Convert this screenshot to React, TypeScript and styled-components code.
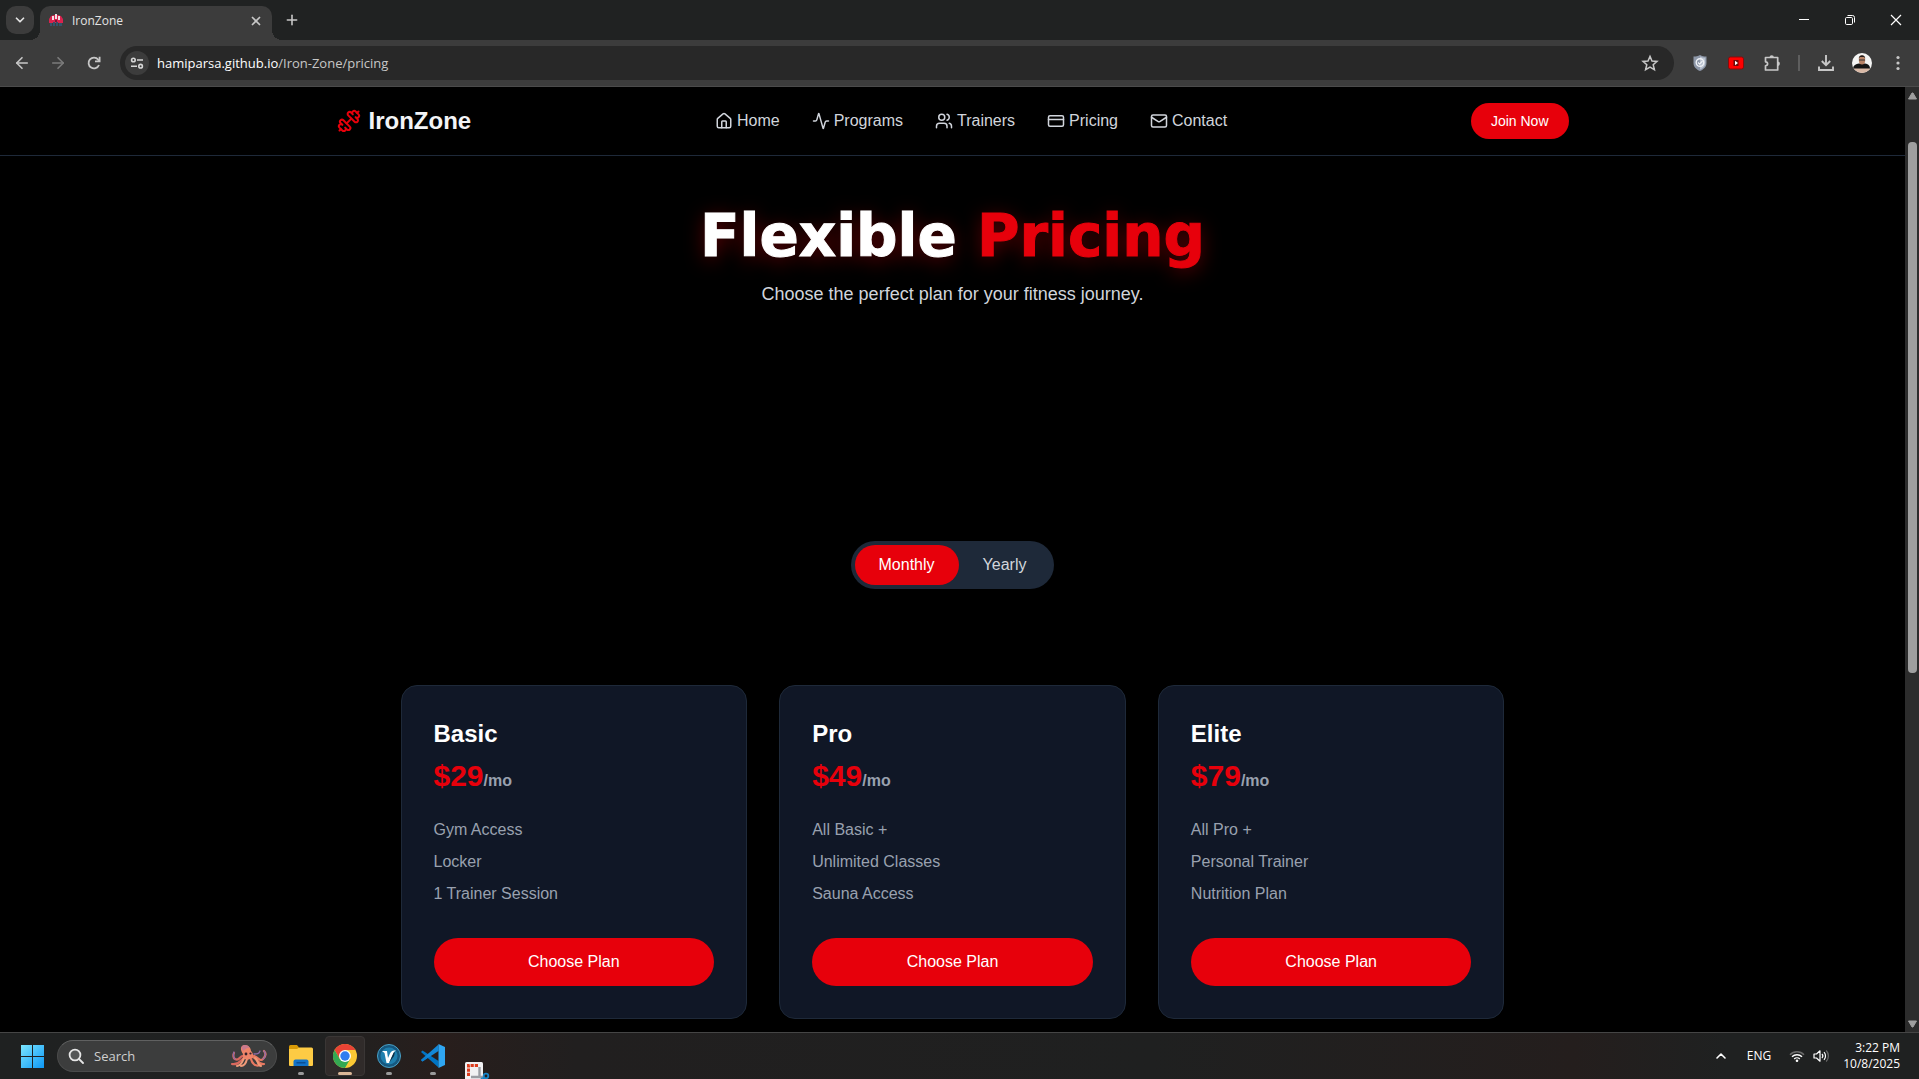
import React, { useState } from "react";
import styled, { createGlobalStyle, css } from "styled-components";
import {
  Activity,
  ArrowLeft,
  ArrowRight,
  ChevronDown,
  ChevronUp,
  CreditCard,
  Dumbbell,
  House,
  Mail,
  Plus,
  Users,
  X,
} from "lucide-react";

const sans = `"Liberation Sans", Arial, sans-serif`;
const ui = `"Open Sans", "Noto Sans", sans-serif`;
const red = "#e7000b";

const GlobalStyle = createGlobalStyle`
  * { box-sizing: border-box; }
  body { margin: 0; background: #000; overflow: hidden; }
  h1, h2, p, ul { margin: 0; padding: 0; }
  button { border: 0; padding: 0; background: none; color: inherit; font: inherit; cursor: pointer; }
  a { color: inherit; text-decoration: none; }
  svg { display: block; flex: none; }
`;

const Screen = styled.div`
  display: flex;
  flex-direction: column;
  height: 100vh;
  overflow: hidden;
`;

/* Browser window */

const TabStrip = styled.header`
  display: flex;
  flex: none;
  height: 40px;
  padding: 6px 0 0 6px;
  background: #202222;
  color: #e3e3e3;
  font: 12px/16px ${ui};
`;

const TabSearch = styled.button`
  display: grid;
  place-items: center;
  width: 28px;
  height: 28px;
  border-radius: 10px;
  background: #3c3c3c;
`;

const Tab = styled.div`
  position: relative;
  display: flex;
  align-items: center;
  gap: 8px;
  width: 232px;
  height: 34px;
  margin-left: 6px;
  padding: 0 8px 4px;
  border-radius: 10px 10px 0 0;
  background: #3c3c3c;

  &::before,
  &::after {
    content: "";
    position: absolute;
    bottom: 0;
    width: 10px;
    height: 10px;
  }
  &::before {
    right: 100%;
    background: radial-gradient(circle at 0 0, transparent 10px, #3c3c3c 10px);
  }
  &::after {
    left: 100%;
    background: radial-gradient(circle at 100% 0, transparent 10px, #3c3c3c 10px);
  }
`;

const TabTitle = styled.span`
  flex: 1;
`;

const PlainButton = styled.button<{ $w: number; $h: number; $dim?: boolean }>`
  display: grid;
  place-items: center;
  flex: none;
  width: ${(p) => p.$w}px;
  height: ${(p) => p.$h}px;
  color: ${(p) => (p.$dim ? "#7b7b7b" : "#c7c7c7")};
`;

const NewTab = styled(PlainButton)`
  margin-left: 6px;
`;

const WindowControls = styled.div`
  display: flex;
  margin-left: auto;
  color: #fff;
`;

const Toolbar = styled.div`
  display: flex;
  align-items: center;
  flex: none;
  height: 47px;
  padding: 0 3px 0 4px;
  border-bottom: 1px solid #4b4b4b;
  background: #3c3c3c;
`;

const AddressBar = styled.form`
  display: flex;
  align-items: center;
  flex: 1;
  height: 34px;
  margin: 0 8px;
  padding: 0 6px 0 5px;
  border-radius: 17px;
  background: #282828;
  font: 13px/20px ${ui};
`;

const SiteInfo = styled.button`
  display: grid;
  place-items: center;
  width: 24px;
  height: 24px;
  border-radius: 12px;
  background: #3c3c3c;
  color: #d6d6d6;
`;

const Address = styled.span`
  flex: 1;
  margin-left: 8px;
  color: #c7c7c7;

  b {
    color: #fff;
    font-weight: 400;
  }
`;

const Divider = styled.span`
  width: 2px;
  height: 16px;
  margin: 0 8px;
  background: #5e5e5e;
`;

/* Site */

const Viewport = styled.div`
  display: flex;
  flex: 1;
  min-height: 0;
`;

const Site = styled.div`
  flex: 1;
  min-width: 0;
  overflow: hidden;
  background: #000;
  color: #fff;
  font: 16px/24px ${sans};
`;

const SiteHeader = styled.header`
  border-bottom: 1px solid #1e2939;
`;

const HeaderInner = styled.div`
  display: flex;
  align-items: center;
  justify-content: space-between;
  max-width: 1280px;
  margin: 0 auto;
  padding: 16px 24px;
`;

const Logo = styled.a`
  display: flex;
  align-items: center;
  gap: 8px;
  color: #f3f4f6;
  font-size: 24px;
  font-weight: 700;
  line-height: 32px;

  svg {
    color: ${red};
  }
`;

const Nav = styled.nav`
  display: flex;
  gap: 32px;
  color: #d1d5dc;
`;

const NavLink = styled.a`
  display: flex;
  align-items: center;
  gap: 4px;
`;

const pill = css`
  border-radius: 24px;
  background: ${red};
  color: #fff;
`;

const JoinButton = styled.button`
  ${pill}
  padding: 8px 20px;
  font-size: 14px;
  line-height: 20px;
`;

const Hero = styled.section`
  padding: 48px 24px 0;
  text-align: center;
`;

const HeroTitle = styled.h1`
  font: 900 58px/64px "DejaVu Sans", ${sans};
  -webkit-text-stroke: 1px currentColor;
  text-shadow: 0 4px 20px rgba(231, 0, 11, 0.4);

  span {
    color: ${red};
  }
`;

const HeroText = styled.p`
  margin-top: 12px;
  color: #d1d5dc;
  font-size: 18px;
  line-height: 28px;
`;

const BillingRow = styled.div`
  display: flex;
  justify-content: center;
  padding: 233px 0 96px;
`;

const Billing = styled.div`
  display: flex;
  padding: 4px;
  border-radius: 24px;
  background: #1e2939;
`;

const BillingOption = styled.button<{ $on: boolean }>`
  padding: 8px 24px;
  border-radius: 20px;
  background: ${(p) => (p.$on ? red : "transparent")};
  color: ${(p) => (p.$on ? "#fff" : "#d1d5dc")};
`;

const Plans = styled.section`
  display: grid;
  grid-template-columns: repeat(3, 1fr);
  gap: 32px;
  max-width: 1152px;
  margin: 0 auto;
  padding: 0 24px 48px;
`;

const PlanCard = styled.article`
  padding: 32px;
  border: 1px solid #1e2939;
  border-radius: 16px;
  background: #101726;
`;

const PlanName = styled.h2`
  font-size: 24px;
  line-height: 32px;
`;

const Price = styled.p`
  margin-top: 8px;
  color: ${red};
  font-size: 30px;
  font-weight: 700;
  line-height: 36px;

  span {
    color: #99a1af;
    font-size: 16px;
    line-height: 24px;
  }
`;

const Features = styled.ul`
  display: grid;
  gap: 8px;
  margin: 24px 0 32px;
  color: #99a1af;
  list-style: none;
`;

const ChooseButton = styled.button`
  ${pill}
  width: 100%;
  padding: 12px;
`;

const ScrollTrack = styled.div`
  display: flex;
  flex-direction: column;
  width: 14px;
  padding: 5px 2px 4px 3px;
  background: #2c2c2c;
`;

const ScrollSpace = styled.div`
  flex: 1;
  display: flex;
  flex-direction: column;
  padding: 42px 0 347px;
`;

const ScrollThumb = styled.div`
  flex: 1;
  border-radius: 4px;
  background: #9f9f9f;
`;

/* Taskbar */

const Taskbar = styled.footer`
  display: flex;
  flex: none;
  height: 47px;
  padding: 0 19px 0 10px;
  border-top: 1px solid #454545;
  background: linear-gradient(90deg, #1f2121 0, #202121 17%, #281e1c 23%, #211f1f 30%, #1f2020 60%, #241e1d 82%, #1f2121 90%);
  color: #fff;
  font: 12px/16px ${ui};
`;

const TaskButton = styled.button<{ $active?: boolean }>`
  position: relative;
  display: grid;
  place-items: center;
  width: 40px;
  height: 40px;
  margin: 3px 2px;
  border: 1px solid ${(p) => (p.$active ? "#3a3635" : "transparent")};
  border-radius: 4px;
  background: ${(p) => (p.$active ? "#302b2a" : "transparent")};
`;

const RunMark = styled.i<{ $active?: boolean }>`
  position: absolute;
  bottom: 0;
  left: 50%;
  width: ${(p) => (p.$active ? 14 : 6)}px;
  height: 3px;
  border-radius: 2px;
  background: ${(p) => (p.$active ? "#dcb898" : "#9a9a9a")};
  transform: translateX(-50%);
`;

const OpeningApp = styled.button`
  align-self: flex-end;
  width: 44px;
  padding-left: 10px;
`;

const SearchBox = styled.label`
  display: flex;
  align-items: center;
  align-self: flex-start;
  gap: 10px;
  width: 220px;
  height: 32px;
  margin: 7px 2px 0 3px;
  padding: 0 8px 0 10px;
  border: 1px solid #4a4b4b;
  border-top-color: #606161;
  border-radius: 16px;
  background: #3c3d3d;
`;

const SearchInput = styled.input`
  flex: 1;
  min-width: 0;
  padding: 0;
  border: 0;
  outline: 0;
  background: none;
  color: #fff;
  font: 13px/20px ${ui};

  &::placeholder {
    color: #cfcfcf;
    opacity: 1;
  }
`;

const Tray = styled.div`
  display: flex;
  align-items: center;
  margin-left: auto;
`;

const Language = styled.span`
  margin: 0 18px;
`;

const TrayStatus = styled.span`
  display: flex;
  gap: 8px;
  margin-right: 13px;
`;

const Clock = styled.time`
  text-align: right;
`;

/* Drawings */

const Favicon = () => (
  <svg width="16" height="16" viewBox="0 0 16 16">
    <path d="M1 10V6l2-3 3-1h4l3 1 2 3v4z" fill="#d9234e" />
    <path d="M4 3h2v4H4zM7 1h2v5H7zM10 3h2v4h-2z" fill="#f3dfe5" />
    <path d="M2 10h2v3H2zM5 9h2v4H5zM8 9h2v4H8zM11 10h3v3h-3z" fill="#31536b" />
    <path d="M7 7h2v2H7z" fill="#7c1233" />
  </svg>
);

const RestoreIcon = () => (
  <svg width="12" height="12" viewBox="0 0 12 12" fill="none" stroke="#fff">
    <rect x="1.5" y="3.5" width="7" height="7" rx="1.2" />
    <path d="M3.5 1.5h5a2 2 0 0 1 2 2v5" />
  </svg>
);

const ReloadIcon = () => (
  <svg width="16" height="16" viewBox="0 0 16 16" fill="none" stroke="currentColor" strokeWidth="1.8">
    <path d="M13 10a5.4 5.4 0 1 1-.8-5.4L13.4 6" />
    <path d="M13.6 1.8v4.6H9" />
  </svg>
);

const TuneIcon = () => (
  <svg width="14" height="14" viewBox="0 0 14 14" fill="none" stroke="currentColor" strokeWidth="1.6">
    <circle cx="3.4" cy="4" r="1.8" />
    <path d="M7 4h6M1 10.200h6" />
    <circle cx="10.600" cy="10.200" r="1.800" />
  </svg>
);

const StarIcon = () => (
  <svg width="18" height="18" viewBox="0 0 18 18" fill="none" stroke="currentColor" strokeWidth="1.5">
    <path d="M9 2.400l2 4.600 5 .4-3.800 3.300 1.200 4.900L9 13l-4.400 2.600 1.200-4.900L2 7.400 7 7z" />
  </svg>
);

const ShieldIcon = () => (
  <svg width="16" height="18" viewBox="0 0 16 18">
    <path d="M8 1c2 1 4 1.500 6.500 1.500V9c0 4-3 6.500-6.500 8-3.500-1.500-6.500-4-6.500-8V2.500C4 2.500 6 2 8 1z" fill="#8d97a8" />
    <path d="M8 2.500c1.800.8 3.500 1.200 5.300 1.200V9c0 3.200-2.300 5.300-5.300 6.600z" fill="#b9c1cf" />
    <circle cx="8" cy="8.500" r="3.800" fill="none" stroke="#eef1f6" strokeWidth="1.400" />
    <path d="M6 8.500l1.600 1.600L10.500 7" fill="none" stroke="#eef1f6" strokeWidth="1.200" />
  </svg>
);

const VideoIcon = () => (
  <svg width="16" height="14" viewBox="0 0 16 14">
    <rect x=".5" y="1" width="15" height="12" rx="2" fill="#f00" stroke="#8b0a0a" />
    <rect x="5.500" y="4" width="5" height="6" fill="#6e0808" />
    <path d="M7 4.800L10 7 7 9.200z" fill="#fff" />
  </svg>
);

const PuzzleIcon = () => (
  <svg width="18" height="18" viewBox="0 0 18 18" fill="none" stroke="currentColor" strokeWidth="1.7" strokeLinejoin="round">
    <path d="M2.500 3.500h12.200V16H2.500v-4.200c2.800-.2 2.800-3.800 0-4z" />
    <path d="M6.500 3.500a2.200 2.200 0 0 1 4.400 0zM14.700 7.600a2.200 2.200 0 0 1 0 4.400z" fill="currentColor" stroke="none" />
  </svg>
);

const DownloadIcon = () => (
  <svg width="18" height="18" viewBox="0 0 18 18" fill="none" stroke="currentColor" strokeWidth="1.9">
    <path d="M9 1v10M4.800 7L9 11.200 13.200 7M2 12.500V16h14v-3.500" />
  </svg>
);

const Avatar = () => (
  <svg width="20" height="20" viewBox="0 0 20 20">
    <clipPath id="avatar-clip">
      <circle cx="10" cy="10" r="10" />
    </clipPath>
    <g clipPath="url(#avatar-clip)">
      <path d="M0 0h20v20H0z" fill="#f5f5f4" />
      <path d="M1 16c0-4 3-5 6-5.500h6c3 .5 5 1.500 5 5.500z" fill="#151515" />
      <ellipse cx="10" cy="7" rx="3.200" ry="4.500" fill="#b88366" />
      <path d="M6.700 5.500C6.700 1 13.300 1 13.300 5.500L12 4H8z" fill="#241c19" />
      <path d="M7 6.500h6v1H7z" fill="#333" />
      <path d="M0 15.500h20V20H0z" fill="#d9b9a6" />
    </g>
  </svg>
);

const DotsIcon = () => (
  <svg width="4" height="16" viewBox="0 0 4 16" fill="currentColor">
    <circle cx="2" cy="2.500" r="1.600" />
    <circle cx="2" cy="8" r="1.600" />
    <circle cx="2" cy="13.500" r="1.600" />
  </svg>
);

const ScrollArrow = ({ down }: { down?: boolean }) => (
  <svg width="9" height="8" viewBox="0 0 9 8" fill="#9f9f9f">
    <path d={down ? "M.5 1h8L5 7H4z" : "M.5 7h8L5 1H4z"} stroke="#9f9f9f" strokeLinejoin="round" />
  </svg>
);

const WindowsIcon = () => (
  <svg width="23" height="23" viewBox="0 0 23 23">
    <linearGradient id="win" x1="0" y1="0" x2="1" y2="1" gradientUnits="objectBoundingBox">
      <stop offset="0" stopColor="#7be6ff" />
      <stop offset="1" stopColor="#0d97f5" />
    </linearGradient>
    <path d="M0 0h11v11H0zM12 0h11v11H12zM0 12h11v11H0zM12 12h11v11H12z" fill="url(#win)" />
  </svg>
);

const SearchIcon = () => (
  <svg width="16" height="16" viewBox="0 0 16 16" fill="none" stroke="#e6e6e6" strokeWidth="1.800">
    <circle cx="7" cy="7" r="5.400" fill="#555757" />
    <path d="M11 11l4 4" strokeLinecap="round" />
  </svg>
);

const OctopusIcon = () => (
  <svg width="38" height="24" viewBox="0 0 38 24" fill="none" strokeLinecap="round">
    <path d="M16 14C11 13 10 22 2 20M14 12C9 11 10 18 5 15c-2-1-2-4-1-6" stroke="#d9685d" strokeWidth="2.200" />
    <path d="M22 13c5 0 5 8 12 7M24 12c5 2 6 6 9 3s3-6 1-8M21 15c1 4 4 8 9 6" stroke="#e87961" strokeWidth="2.200" />
    <path d="M5 15c-2-2-2-4-1-7M33 15c3-2 3-6 1-8M24 10c3 0 5 0 6-3" stroke="#8d6ba8" strokeWidth="1.300" />
    <path d="M14 14c-2 4-2 7-7 8M17 15c-1 4-3 7-6 7M25 14c3 1 2 7 6 8" stroke="#f09a78" strokeWidth="2" />
    <path d="M12 2c4-3 9 1 9 5 3 3 3 7-1 8-4 2-8-1-7-5-2-3-3-6-1-8z" fill="#ee8468" />
    <path d="M12 2c3-2 6-1 8 2-3-1-4 1-7 3-1-2-2-3-1-5z" fill="#c9798d" />
    <circle cx="16" cy="10" r="1.400" fill="#35212b" />
    <circle cx="20.500" cy="9.500" r="1.100" fill="#35212b" />
  </svg>
);

const FolderIcon = () => (
  <svg width="24" height="24" viewBox="0 0 24 24">
    <path d="M0 2.500Q0 1 1.500 1H8l2 2.500V7H0z" fill="#d99a06" />
    <path d="M0 5h8l2-1.500h12.500Q24 3.500 24 5v16Q24 22 23 22H1q-1 0-1-1z" fill="#fdcb44" />
    <path d="M4.500 22v-4.500q0-2 2-2h11q2 0 2 2V22z" fill="#1273c8" />
    <path d="M7.500 18h9v1.500h-9z" fill="#0a4f94" />
  </svg>
);

const ChromeIcon = () => (
  <svg width="24" height="24" viewBox="0 0 24 24">
    <circle cx="12" cy="12" r="12" fill="#fcc934" />
    <path d="M1.600 6A12 12 0 0 1 22.400 6H12L6.800 15z" fill="#ea4335" />
    <path d="M1.600 6A12 12 0 0 0 12 24l5.200-9H6.800z" fill="#34a853" />
    <circle cx="12" cy="12" r="6" fill="#fff" />
    <circle cx="12" cy="12" r="4.700" fill="#2f7df0" />
  </svg>
);

const BirdIcon = () => (
  <svg width="24" height="24" viewBox="0 0 24 24">
    <circle cx="12" cy="12" r="11.500" fill="#16587f" stroke="#4aa0c6" />
    <circle cx="12" cy="12" r="8.500" fill="#1f7fae" />
    <path d="M5 7h5l1 7 2-4.500C14 7 16 6.500 19 6.500c-1 1-2 1-2.500 2.500L12 19H9.500L7.500 9z" fill="#fff" />
    <path d="M12 19l4.500-10 1.500-1-1 4z" fill="#0b2c42" />
  </svg>
);

const CodeIcon = () => (
  <svg width="24" height="24" viewBox="0 0 24 24">
    <path d="M1.500 6.500L0 8l17.500 15.500V17z" fill="#0074c4" />
    <path d="M1.500 17.500L0 16 17.500.5V7z" fill="#1288d8" />
    <path d="M17.500 0L24 3v18l-6.500 3z" fill="#2fa6f2" />
    <path d="M1.500 17.500L0 16l4-3.600 3 1z" fill="#0b7fd0" />
  </svg>
);

const SnipIcon = () => (
  <svg width="25" height="17" viewBox="0 0 25 17">
    <path d="M0 1.500Q0 0 1.500 0h15Q18 0 18 1.500V17H0z" fill="#f1f1f3" />
    <path d="M3.500 14V3.500H13" fill="none" stroke="#dc3d1e" strokeWidth="3" strokeDasharray="3.200 1" />
    <path d="M14.500 5v9M6 15h13" stroke="#9a9da3" strokeWidth="2.400" />
    <circle cx="21" cy="14" r="2.300" fill="none" stroke="#1685c9" strokeWidth="1.800" />
    <circle cx="18" cy="18" r="2" fill="none" stroke="#1685c9" strokeWidth="1.600" />
  </svg>
);

const WifiIcon = () => (
  <svg width="16" height="14" viewBox="0 0 16 14" fill="none" strokeWidth="1.400">
    <path d="M1 5.800a9.500 9.500 0 0 1 14 0" stroke="#6b6b6b" />
    <path d="M3 7.800a7 7 0 0 1 10 0M5.200 10a4 4 0 0 1 5.600 0" stroke="#fff" />
    <circle cx="8" cy="11.800" r="1.300" fill="#fff" />
  </svg>
);

const VolumeIcon = () => (
  <svg width="17" height="14" viewBox="0 0 17 14" fill="none" stroke="#fff" strokeWidth="1.200">
    <path d="M1 5h2.500L7 1.800v10.400L3.500 9H1z" strokeLinejoin="round" />
    <path d="M9 5a3 3 0 0 1 0 4M11 3.200a5.500 5.500 0 0 1 0 7.600" />
    <path d="M13.200 1.500a8 8 0 0 1 0 11" stroke="#6b6b6b" />
  </svg>
);

const links = [
  { label: "Home", icon: House },
  { label: "Programs", icon: Activity },
  { label: "Trainers", icon: Users },
  { label: "Pricing", icon: CreditCard },
  { label: "Contact", icon: Mail },
];

const plans = [
  { name: "Basic", price: 29, features: ["Gym Access", "Locker", "1 Trainer Session"] },
  { name: "Pro", price: 49, features: ["All Basic +", "Unlimited Classes", "Sauna Access"] },
  { name: "Elite", price: 79, features: ["All Pro +", "Personal Trainer", "Nutrition Plan"] },
];

const apps = [
  { name: "File Explorer", icon: FolderIcon },
  { name: "Chrome", icon: ChromeIcon, active: true },
  { name: "V", icon: BirdIcon },
  { name: "Code", icon: CodeIcon },
];

function BrowserChrome() {
  return (
    <>
      <TabStrip>
        <TabSearch aria-label="Search tabs">
          <ChevronDown size={14} strokeWidth={3} />
        </TabSearch>
        <Tab>
          <Favicon />
          <TabTitle>IronZone</TabTitle>
          <PlainButton $w={16} $h={16} aria-label="Close tab">
            <X size={14} strokeWidth={3} />
          </PlainButton>
        </Tab>
        <NewTab $w={28} $h={28} aria-label="New tab">
          <Plus size={16} strokeWidth={2.4} />
        </NewTab>
        <WindowControls>
          <PlainButton $w={46} $h={28} aria-label="Minimize">
            <svg width="10" height="10" viewBox="0 0 10 10">
              <path d="M0 4h10v1H0z" fill="#fff" />
            </svg>
          </PlainButton>
          <PlainButton $w={46} $h={28} aria-label="Restore">
            <RestoreIcon />
          </PlainButton>
          <PlainButton $w={46} $h={28} aria-label="Close">
            <svg width="12" height="12" viewBox="0 0 12 12" stroke="#fff" strokeWidth="1.200">
              <path d="M1 1l10 10M11 1L1 11" />
            </svg>
          </PlainButton>
        </WindowControls>
      </TabStrip>
      <Toolbar>
        <PlainButton $w={36} $h={34} aria-label="Back">
          <ArrowLeft size={18} strokeWidth={2.2} />
        </PlainButton>
        <PlainButton $w={36} $h={34} $dim aria-label="Forward">
          <ArrowRight size={18} strokeWidth={2.2} />
        </PlainButton>
        <PlainButton $w={36} $h={34} aria-label="Reload">
          <ReloadIcon />
        </PlainButton>
        <AddressBar>
          <SiteInfo type="button" aria-label="Site information">
            <TuneIcon />
          </SiteInfo>
          <Address>
            <b>hamiparsa.github.io</b>/Iron-Zone/pricing
          </Address>
          <PlainButton type="button" $w={36} $h={34} aria-label="Bookmark">
            <StarIcon />
          </PlainButton>
        </AddressBar>
        <PlainButton $w={36} $h={34} aria-label="Protection">
          <ShieldIcon />
        </PlainButton>
        <PlainButton $w={36} $h={34} aria-label="Video">
          <VideoIcon />
        </PlainButton>
        <PlainButton $w={36} $h={34} aria-label="Extensions">
          <PuzzleIcon />
        </PlainButton>
        <Divider />
        <PlainButton $w={36} $h={34} aria-label="Downloads">
          <DownloadIcon />
        </PlainButton>
        <PlainButton $w={36} $h={34} aria-label="Profile">
          <Avatar />
        </PlainButton>
        <PlainButton $w={36} $h={34} aria-label="Menu">
          <DotsIcon />
        </PlainButton>
      </Toolbar>
    </>
  );
}

function PricingPage() {
  const [yearly, setYearly] = useState(false);
  return (
    <Site>
      <SiteHeader>
        <HeaderInner>
          <Logo href="#home">
            <Dumbbell size={24} />
            IronZone
          </Logo>
          <Nav>
            {links.map(({ label, icon: Icon }) => (
              <NavLink key={label} href={`#${label.toLowerCase()}`}>
                <Icon size={18} />
                {label}
              </NavLink>
            ))}
          </Nav>
          <JoinButton>Join Now</JoinButton>
        </HeaderInner>
      </SiteHeader>
      <main>
        <Hero>
          <HeroTitle>
            Flexible <span>Pricing</span>
          </HeroTitle>
          <HeroText>Choose the perfect plan for your fitness journey.</HeroText>
        </Hero>
        <BillingRow>
          <Billing>
            <BillingOption $on={!yearly} onClick={() => setYearly(false)}>
              Monthly
            </BillingOption>
            <BillingOption $on={yearly} onClick={() => setYearly(true)}>
              Yearly
            </BillingOption>
          </Billing>
        </BillingRow>
        <Plans>
          {plans.map((plan) => (
            <PlanCard key={plan.name}>
              <PlanName>{plan.name}</PlanName>
              <Price>
                ${yearly ? plan.price * 10 : plan.price}
                <span>/{yearly ? "yr" : "mo"}</span>
              </Price>
              <Features>
                {plan.features.map((feature) => (
                  <li key={feature}>{feature}</li>
                ))}
              </Features>
              <ChooseButton>Choose Plan</ChooseButton>
            </PlanCard>
          ))}
        </Plans>
      </main>
    </Site>
  );
}

function SystemTaskbar() {
  return (
    <Taskbar>
      <TaskButton aria-label="Start">
        <WindowsIcon />
      </TaskButton>
      <SearchBox>
        <SearchIcon />
        <SearchInput type="text" placeholder="Search" aria-label="Search" />
        <OctopusIcon />
      </SearchBox>
      {apps.map(({ name, icon: Icon, active }) => (
        <TaskButton key={name} $active={active} aria-label={name}>
          <Icon />
          <RunMark $active={active} />
        </TaskButton>
      ))}
      <OpeningApp aria-label="Snipping Tool">
        <SnipIcon />
      </OpeningApp>
      <Tray>
        <ChevronUp size={16} strokeWidth={2.4} />
        <Language>ENG</Language>
        <TrayStatus>
          <WifiIcon />
          <VolumeIcon />
        </TrayStatus>
        <Clock>
          3:22 PM
          <br />
          10/8/2025
        </Clock>
      </Tray>
    </Taskbar>
  );
}

export default function App() {
  return (
    <Screen>
      <GlobalStyle />
      <BrowserChrome />
      <Viewport>
        <PricingPage />
        <ScrollTrack>
          <ScrollArrow />
          <ScrollSpace>
            <ScrollThumb />
          </ScrollSpace>
          <ScrollArrow down />
        </ScrollTrack>
      </Viewport>
      <SystemTaskbar />
    </Screen>
  );
}
